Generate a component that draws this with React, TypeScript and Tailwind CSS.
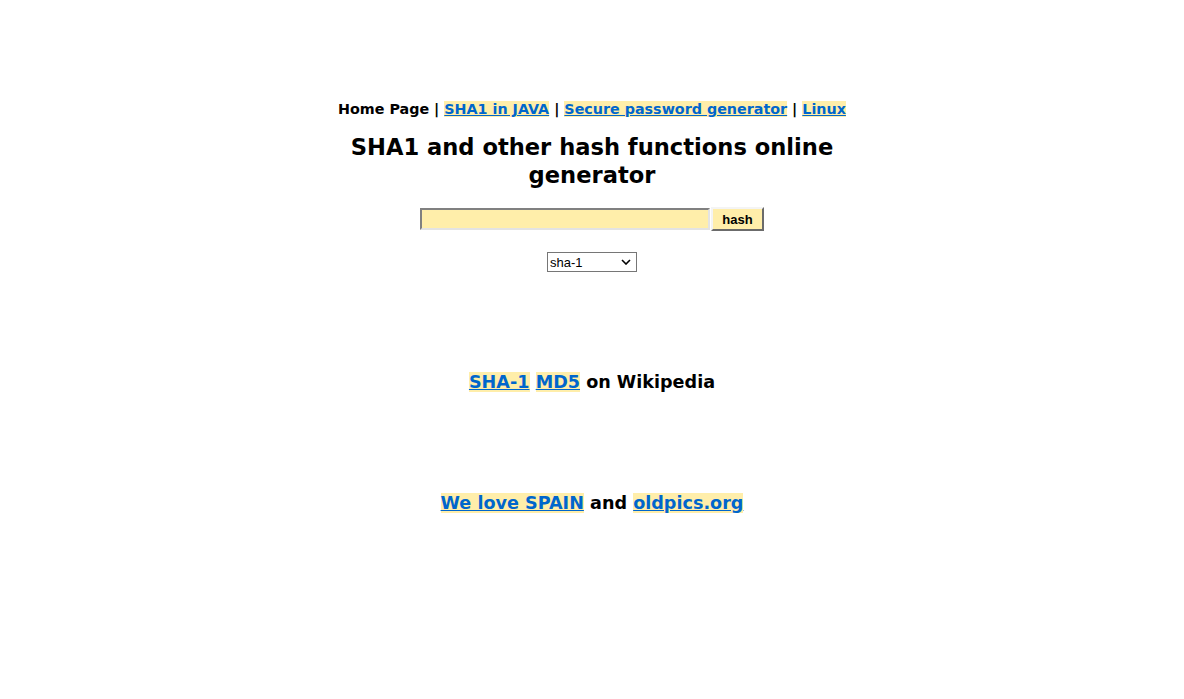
import React, { useState } from "react"

const linkCls = "text-[#0066cc] underline bg-[#ffeeaa]"

const App = () => {
  const [text, setText] = useState("")
  const [algo, setAlgo] = useState("sha-1")

  return (
    <div className="min-h-screen bg-white font-['DejaVu_Sans',Verdana,sans-serif] text-black">
      <div className="w-[560px] mx-auto text-center pt-[100px]">
        <div className="text-[14.3px] leading-[18px] font-bold whitespace-nowrap">
          Home Page | <a href="#" className={linkCls}>SHA1 in JAVA</a> |{" "}
          <a href="#" className={linkCls}>Secure password generator</a> |{" "}
          <a href="#" className={linkCls}>Linux</a>
        </div>

        <h1 className="mt-[15px] text-[22.6px] leading-[28px] font-bold">
          SHA1 and other hash functions online generator
        </h1>

        <form className="mt-[18px] flex justify-center items-center" onSubmit={(e) => e.preventDefault()}>
          <input
            value={text}
            onChange={(e) => setText(e.target.value)}
            className="w-[290px] h-[22px] bg-[#ffeeaa] border-2 border-t-[#808080] border-l-[#808080] border-b-[#e3e3e3] border-r-[#e3e3e3] outline-none text-[13px] px-1"
          />
          <button
            type="submit"
            className="ml-px w-[53px] h-[24px] bg-[#ffeeaa] border-2 border-t-[#f4f4f4] border-l-[#f4f4f4] border-b-[#6b6b6b] border-r-[#6b6b6b] font-['Liberation_Sans',Arial,sans-serif] font-bold text-[13px] leading-none"
          >
            hash
          </button>
        </form>

        <div className="mt-[21px] flex justify-center">
          <div className="relative w-[90px] h-[20px]">
            <select
              value={algo}
              onChange={(e) => setAlgo(e.target.value)}
              className="block appearance-none w-full h-full border border-[#767676] bg-white pl-[2px] text-[13px] leading-none font-['Liberation_Sans',Arial,sans-serif] text-left"
            >
              <option value="sha-1">sha-1</option>
              <option value="sha-256">sha-256</option>
              <option value="sha-384">sha-384</option>
              <option value="sha-512">sha-512</option>
              <option value="md5">md5</option>
            </select>
            <svg className="absolute right-[6px] top-[7px] pointer-events-none" width="10" height="6" viewBox="0 0 10 6">
              <path d="M1 1 L5 5 L9 1" fill="none" stroke="#000" strokeWidth="1.6" />
            </svg>
          </div>
        </div>

        <div className="mt-[99px] text-[17.6px] leading-[22px] font-bold">
          <a href="#" className={linkCls}>SHA-1</a> <a href="#" className={linkCls}>MD5</a> on Wikipedia
        </div>

        <div className="mt-[99px] text-[17.6px] leading-[22px] font-bold">
          <a href="#" className={linkCls}>We love SPAIN</a> and <a href="#" className={linkCls}>oldpics.org</a>
        </div>
      </div>
    </div>
  )
}

export default App
